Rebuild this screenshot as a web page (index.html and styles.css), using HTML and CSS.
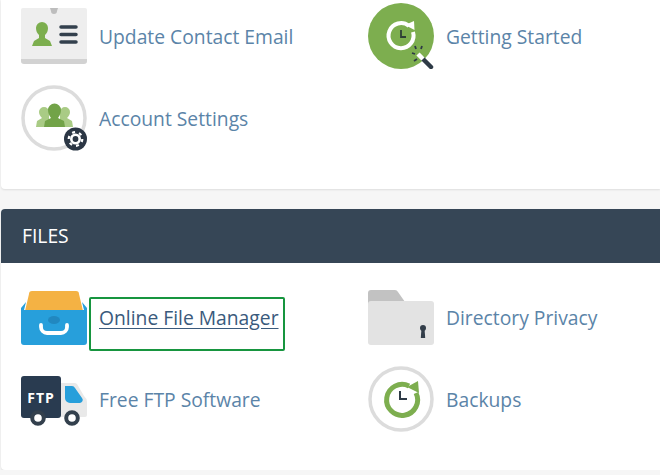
FILE: index.html
```html
<!DOCTYPE html>
<html lang="en">

<head>
  <meta charset="UTF-8">
  <meta name="viewport" content="width=device-width, initial-scale=1.0">
  <title>cPanel Tools</title>

  <link rel="stylesheet" href="styles.css">
</head>

<body>
  <section class="panel panel-top">
    <div class="tool-grid">
      <a class="tool" href="#">
        <svg class="icon" viewBox="0 0 66 66">
          <rect x="0" y="5" width="66" height="55" rx="2" fill="#eeeeee"/>
          <path d="M0 56h66v2a3 3 0 0 1-3 3H3a3 3 0 0 1-3-3z" fill="#d2d2d2"/>
          <path d="M29 5h8l-1 3a3 3 0 0 1-6 0z" fill="#bdbdbd"/>
          <path d="M31 43H11l2-5 5-3v-3c-2-2-3-4-3-7a6 6 0 0 1 12 0c0 3-1 5-3 7v3l5 3z" fill="#7cae4e"/>
          <path d="M40 24h15M40 31.500h15M40 39h15" stroke="#33404d" stroke-width="3.500" stroke-linecap="round"/>
        </svg>
        <span>Update Contact Email</span>
      </a>
      <a class="tool" href="#">
        <svg class="icon" viewBox="0 0 66 66">
          <circle cx="33" cy="33" r="33" fill="#7dae4f"/>
          <path d="M41 23a12.500 12.500 0 1 0 4 6" fill="none" stroke="#fff" stroke-width="4"/>
          <path d="M37 22l9-4 .5 9z" fill="#fff"/>
          <path d="M33 27v7h5" fill="none" stroke="#2e3f36" stroke-width="1.800"/>
          <path d="M47 51l-3-1M48 46l-1-3M53 46l1-3M49 56l-3 2" stroke="#2e3a46" stroke-width="1.800"/>
          <path d="M55 56l8 8" stroke="#2e3a46" stroke-width="4.500" stroke-linecap="round"/>
          <path d="M50 51l5 5" stroke="#fff" stroke-width="4.500"/>
        </svg>
        <span>Getting Started</span>
      </a>
      <a class="tool" href="#">
        <svg class="icon" viewBox="0 0 66 66">
          <circle cx="33" cy="33" r="31" fill="#fff" stroke="#dcdcdc" stroke-width="3.500"/>
          <path d="M15 42l1-6 5-3c-2-2-3-4-3-6a5 5 0 0 1 10 0v15z" fill="#a9cb85"/>
          <path d="M39 42V27a5 5 0 0 1 10 0c0 2-1 4-3 6l5 3 1 6z" fill="#a9cb85"/>
          <path d="M23 42l1-6 6-3c-2-3-3-5-3-8a6.500 6.500 0 0 1 13 0c0 3-1 5-3 8l6 3 1 6z" fill="#72a348"/>
          <circle cx="54.500" cy="54" r="11.500" fill="#2b3644"/>
          <circle cx="54.500" cy="54" r="6.800" fill="none" stroke="#fff" stroke-width="2.200" stroke-dasharray="3 4.100"/>
          <circle cx="54.500" cy="54" r="4.200" fill="none" stroke="#fff" stroke-width="2.600"/>
        </svg>
        <span>Account Settings</span>
      </a>
    </div>
  </section>

  <section class="panel panel-files">
    <h2 class="panel-title">FILES</h2>
    <div class="tool-grid">
      <a class="tool tool-active" href="#">
        <svg class="icon" viewBox="0 0 66 66">
          <path d="M4 27L8 10a3 3 0 0 1 3-3h44a3 3 0 0 1 3 3l4 17z" fill="#f4b244"/>
          <path d="M5 18L0 24v34a3 3 0 0 0 3 3h60a3 3 0 0 0 3-3V24l-5-6 2 8H3z" fill="#279fdb"/>
          <ellipse cx="33" cy="36" rx="6" ry="4" fill="#2188c0"/>
          <path d="M20 41v2a6 6 0 0 0 6 6h14a6 6 0 0 0 6-6v-2" fill="none" stroke="#fff" stroke-width="3.800" stroke-linecap="round"/>
        </svg>
        <span class="tool-label">Online File Manager</span>
      </a>
      <a class="tool" href="#">
        <svg class="icon" viewBox="0 0 66 66">
          <path d="M0 28V9a3 3 0 0 1 3-3h24a4 4 0 0 1 3 2l7 10v10z" fill="#c2c2c2"/>
          <rect x="0" y="17" width="66" height="44" rx="3" fill="#e3e3e3"/>
          <circle cx="55" cy="44" r="3" fill="#333e4a"/>
          <path d="M53.500 44h3l.7 10h-4.400z" fill="#333e4a"/>
        </svg>
        <span>Directory Privacy</span>
      </a>
      <a class="tool" href="#">
        <svg class="icon" viewBox="0 0 66 66">
          <path d="M40 17h13a4 4 0 0 1 3 1l7 12a8 8 0 0 1 3 6v13a2 2 0 0 1-2 2H40z" fill="#e9e9e9"/>
          <path d="M44 20h7a4 4 0 0 1 3 2l7 10a3 3 0 0 1-2 5H49a5 5 0 0 1-5-5z" fill="#279fdb"/>
          <rect x="0" y="10" width="40" height="42" rx="3" fill="#293b50"/>
          <text class="ftp-text" x="20" y="37" text-anchor="middle">FTP</text>
          <circle cx="17" cy="52" r="5.800" fill="#fff" stroke="#33404d" stroke-width="4"/>
          <circle cx="51" cy="52" r="5.800" fill="#fff" stroke="#33404d" stroke-width="4"/>
        </svg>
        <span>Free FTP Software</span>
      </a>
      <a class="tool" href="#">
        <svg class="icon" viewBox="0 0 66 66">
          <circle cx="33" cy="33" r="31" fill="#fff" stroke="#dcdcdc" stroke-width="3.500"/>
          <path d="M41 20a15.500 15.500 0 1 0 7 7" fill="none" stroke="#7dae4f" stroke-width="5"/>
          <path d="M39 21l11-6 1 12z" fill="#7dae4f"/>
          <path d="M32 25v8h7" fill="none" stroke="#2e3a46" stroke-width="2"/>
        </svg>
        <span>Backups</span>
      </a>
    </div>
  </section>
</body>

</html>
```

FILE: styles.css
```css
body {
  margin: 0;
  padding-left: 1px;
  background-color: #f6f6f6;
  font-family: 'Open Sans', sans-serif;
  overflow: hidden;
}

.panel {
  background-color: #ffffff;
  box-shadow: 0 1px 2px #dddddd;
}

.panel-top {
  padding: 3px 0 38px;
  border-radius: 0 0 0 4px;
  margin-bottom: 20px;
}

.panel-files {
  padding-bottom: 38px;
  border-radius: 4px 0 0 4px;
}

.panel-title {
  margin: 0 0 21px;
  padding: 0 21px;
  height: 54px;
  line-height: 54px;
  background-color: #364656;
  color: #ffffff;
  font-size: 19.300px;
  font-weight: 400;
  border-radius: 4px 0 0 0;
}

.tool-grid {
  display: grid;
  grid-template-columns: 347px 1fr;
  row-gap: 16px;
  padding-left: 20px;
}

.tool {
  display: flex;
  align-items: center;
  gap: 12px;
  height: 66px;
  color: #5b84a8;
  font-size: 19.300px;
  text-decoration: none;
}

.icon {
  width: 66px;
  height: 66px;
  flex-shrink: 0;
}

.ftp-text {
  fill: #ffffff;
  font-family: 'Open Sans', sans-serif;
  font-size: 14px;
  font-weight: 700;
  letter-spacing: 1px;
}

.tool-active {
  color: #3a5a7c;
}

.tool-label {
  position: relative;
  text-decoration: underline;
  text-underline-offset: 3px;
}

.tool-label::after {
  content: "";
  position: absolute;
  left: -10px;
  right: -6px;
  top: -7px;
  height: 50px;
  border: 2px solid #17953f;
  border-radius: 2px;
}
```
